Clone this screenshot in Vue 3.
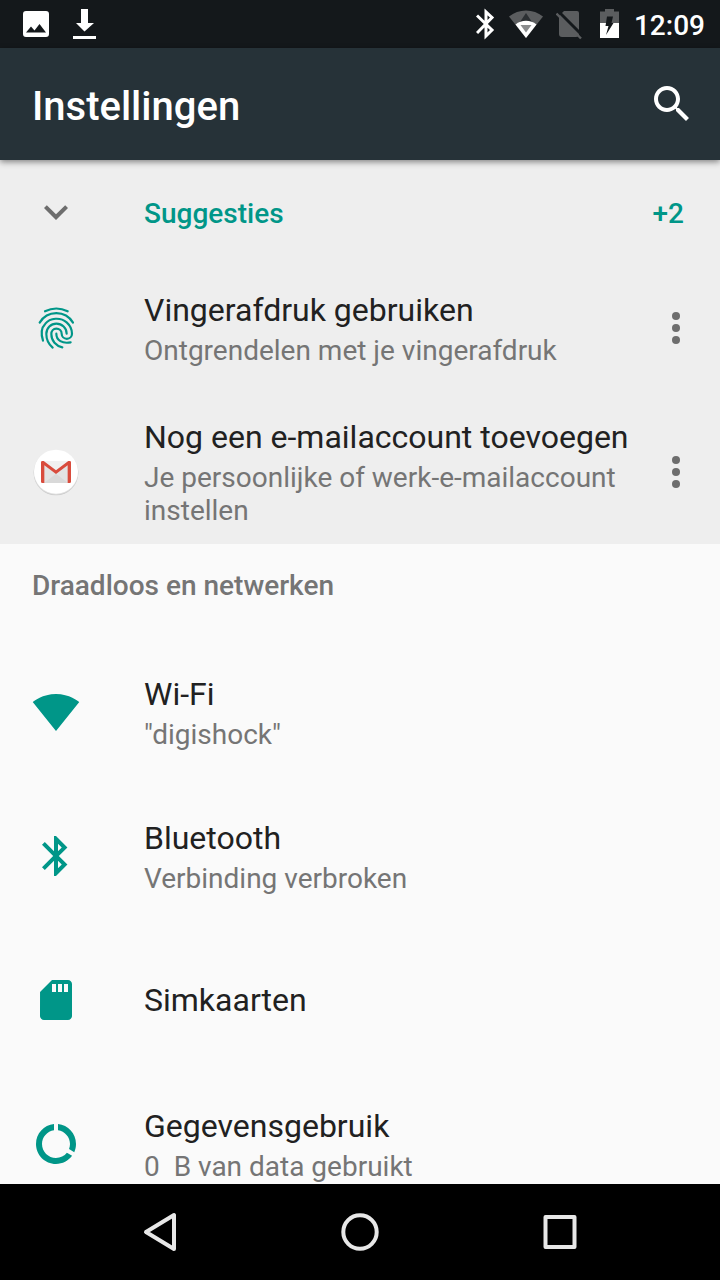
<script setup>
const suggestions = [
  { id: 'fingerprint', title: 'Vingerafdruk gebruiken', summary: 'Ontgrendelen met je vingerafdruk' },
  { id: 'mail', title: 'Nog een e-mailaccount toevoegen', summary: 'Je persoonlijke of werk-e-mailaccount instellen' }
]

const settings = [
  {
    id: 'wifi',
    title: 'Wi-Fi',
    summary: '"digishock"',
    icon: 'M12.01 21.49L23.64 7c-.45-.34-4.93-4-11.64-4C5.28 3 .81 6.66.36 7l11.63 14.49.01.01.01-.01z'
  },
  {
    id: 'bluetooth',
    title: 'Bluetooth',
    summary: 'Verbinding verbroken',
    icon: 'M17.71 7.71L12 2h-1v7.59L6.41 5 5 6.41 10.59 12 5 17.59 6.41 19 11 14.41V22h1l5.71-5.71-4.3-4.29 4.3-4.29zM13 5.83l1.88 1.88L13 9.59V5.83zm1.88 10.46L13 18.17v-3.76l1.88 1.88z'
  },
  {
    id: 'sim',
    title: 'Simkaarten',
    summary: '',
    icon: 'M18 2h-8L4.02 8 4 20c0 1.1.9 2 2 2h12c1.1 0 2-.9 2-2V4c0-1.1-.9-2-2-2zm-6 6h-2V4h2v4zm3 0h-2V4h2v4zm3 0h-2V4h2v4z'
  },
  {
    id: 'data',
    title: 'Gegevensgebruik',
    summary: '0\u00a0 B van data gebruikt',
    icon: 'M13 2.05v3.03c3.39.49 6 3.39 6 6.92 0 .9-.18 1.75-.48 2.54l2.6 1.53c.56-1.24.88-2.62.88-4.07 0-5.18-3.95-9.45-9-9.95zM12 19c-3.87 0-7-3.13-7-7 0-3.53 2.61-6.43 6-6.92V2.05c-5.06.5-9 4.76-9 9.95 0 5.52 4.47 10 9.99 10 3.31 0 6.24-1.61 8.06-4.09l-2.6-1.53C16.17 17.98 14.21 19 12 19z'
  }
]
</script>

<template>
  <div class="screen">
    <div class="status-bar">
      <div class="notifications">
        <svg width="28" height="48" viewBox="0 0 28 48" aria-hidden="true">
          <path fill="#fff" fill-rule="evenodd" d="M4 11h20a3 3 0 0 1 3 3v20a3 3 0 0 1-3 3H4a3 3 0 0 1-3-3V14a3 3 0 0 1 3-3zM4 32.500h20l-6.500-8.500-5 6.500-3.500-4z" />
        </svg>
        <svg width="24" height="48" viewBox="0 0 24 48" aria-hidden="true">
          <path fill="#fff" d="M9 9h7v14h6L12.500 31.500 4 23h5zM1 36h23v3H1z" />
        </svg>
      </div>
      <div class="system">
        <svg width="20" height="48" viewBox="476 0 20 48" aria-hidden="true">
          <path fill="none" stroke="#fff" stroke-width="3" d="M477 15.500l15 14.500-6 6V12l6 5.500L477 33" />
        </svg>
        <svg width="36" height="48" viewBox="508 0 36 48" aria-hidden="true">
          <path fill="#5b5d5f" d="M526 38L509 16.500a27 27 0 0 1 34 0z" />
          <path fill="#2c3033" d="M526 13l6 9h-12z" />
          <path fill="#fff" d="M526 38l-10.500-13.500a16.500 16.500 0 0 1 21 0z" />
          <path fill="#8a8c8d" d="M526 32.500l-5.500-7.500h11z" />
        </svg>
        <svg width="30" height="48" viewBox="556 0 30 48" aria-hidden="true">
          <path fill="#5b5d5f" d="M564 11h13q2 0 2 2v21q0 3-3 3h-14q-3 0-3-3V16z" />
          <path stroke="#14181b" stroke-width="3" d="M558 11l25 25" />
          <path stroke="#5b5d5f" stroke-width="2.400" d="M556.500 13.500l24.500 25" />
        </svg>
        <svg width="24" height="48" viewBox="598 0 24 48" aria-hidden="true">
          <path fill="#5b5d5f" d="M600 11.500h5V9h9v2.500h5V23h-19z" />
          <path fill="#fff" d="M600 23h19v15h-19z" />
          <path fill="#14181b" d="M607 16.500h6l-1.500 6.500h2l-7.500 12 2.500-9h-3z" />
        </svg>
        <span class="clock">12:09</span>
      </div>
    </div>

    <header class="app-bar">
      <h1>Instellingen</h1>
      <button type="button" class="icon-button" aria-label="Zoeken">
        <svg width="48" height="48" viewBox="0 0 24 24" fill="#fff">
          <path d="M15.500 14h-.79l-.28-.27C15.410 12.590 16 11.110 16 9.500 16 5.910 13.090 3 9.500 3S3 5.910 3 9.500 5.910 16 9.500 16c1.610 0 3.090-.59 4.230-1.570l.27.28v.79l5 4.990L20.490 19l-4.990-5zm-6 0C7.010 14 5 11.990 5 9.500S7.010 5 9.500 5 14 7.010 14 9.500 11.990 14 9.500 14z" />
        </svg>
      </button>
    </header>

    <main>
      <section class="suggestions">
        <button type="button" class="suggestions-head" aria-expanded="true">
          <svg width="48" height="48" viewBox="0 0 24 24" fill="#6d6d6d" aria-hidden="true">
            <path d="M16.590 8.590L12 13.170 7.410 8.590 6 10l6 6 6-6z" />
          </svg>
          <span class="head-label">Suggesties</span>
          <span class="head-count">+2</span>
        </button>

        <div v-for="item in suggestions" :key="item.id" class="suggestion">
          <a class="row" :href="'#' + item.id">
            <svg v-if="item.id === 'fingerprint'" class="row-icon" width="48" height="48" viewBox="18 27 144 144" aria-hidden="true">
              <g fill="none" stroke="#009688" stroke-width="6.500" stroke-linecap="round">
                <path d="M57 49Q91 32 125 49" />
                <path d="M41 83C64 45 118 45 141 83" />
                <path d="M51 137C44 115 46 98 58 86C72 68 104 66 122 82C133 92 138 104 138 116A15.500 15.500 0 0 1 107 116C107 107 100 101 91 101C82 101 76 108 76 117C76 138 90 153 109 157" />
                <path d="M80 158C66 146 61 132 61 117C61 99 75 86 91 86C108 86 122 99 122 116" />
                <path d="M91 116C91 136 109 147 134 142" />
              </g>
            </svg>
            <svg v-else class="row-icon" width="48" height="48" viewBox="18 24 144 144" aria-hidden="true">
              <circle cx="90" cy="99" r="67" fill="#c9c9c9" />
              <circle cx="90" cy="97" r="67" fill="#dedede" />
              <circle cx="90" cy="95" r="66" fill="#fff" />
              <path fill="#e3e3e3" d="M49 63h82v66H49z" />
              <path fill="#d9d9d9" d="M54 129l36-28 36 28z" />
              <path fill="#f1f1f1" d="M52 63h76L90 92z" />
              <path fill="#d94c3d" d="M45 67q0-4 4-4h4l37 28 37-28h4q4 0 4 4v58q0 4-4 4h-6V76L90 102 55 76v53h-6q-4 0-4-4z" />
            </svg>
            <span class="text">
              <span class="title">{{ item.title }}</span>
              <span class="summary">{{ item.summary }}</span>
            </span>
          </a>
          <button type="button" class="icon-button" :aria-label="'Meer opties: ' + item.title">
            <svg width="48" height="48" viewBox="0 0 48 48" fill="#6d6d6d">
              <circle cx="24" cy="12" r="4" />
              <circle cx="24" cy="24" r="4" />
              <circle cx="24" cy="36" r="4" />
            </svg>
          </button>
        </div>
      </section>

      <section>
        <h2>Draadloos en netwerken</h2>
        <a v-for="item in settings" :key="item.id" class="row" :href="'#' + item.id">
          <svg class="row-icon" width="48" height="48" viewBox="0 0 24 24" fill="#009688" aria-hidden="true">
            <path :d="item.icon" />
          </svg>
          <span class="text">
            <span class="title">{{ item.title }}</span>
            <span v-if="item.summary" class="summary">{{ item.summary }}</span>
          </span>
        </a>
      </section>
    </main>

    <nav aria-label="Systeemnavigatie">
      <button type="button" aria-label="Terug">
        <svg width="48" height="48" viewBox="0 0 48 48"><path d="M10 24l28-17v34z" /></svg>
      </button>
      <button type="button" aria-label="Startscherm">
        <svg width="48" height="48" viewBox="0 0 48 48"><circle cx="24" cy="24" r="16.700" /></svg>
      </button>
      <button type="button" aria-label="Overzicht">
        <svg width="48" height="48" viewBox="0 0 48 48"><rect x="9.500" y="9" width="29" height="30" /></svg>
      </button>
    </nav>
  </div>
</template>

<style>
body {
  margin: 0;
}
</style>

<style scoped>
.screen {
  height: 100vh;
  display: flex;
  flex-direction: column;
  overflow: hidden;
  background: #fafafa;
  color: #212121;
  font-family: Roboto, "Noto Sans", sans-serif;
}

button {
  margin: 0;
  padding: 0;
  border: 0;
  background: none;
  font-family: inherit;
  cursor: pointer;
}

svg {
  display: block;
  flex: none;
}

.status-bar {
  flex: none;
  display: flex;
  justify-content: space-between;
  height: 48px;
  padding: 0 15px 0 22px;
  background: #14181b;
}

.notifications,
.system {
  display: flex;
  align-items: center;
}

.notifications {
  gap: 22px;
}

.system {
  gap: 12px;
}

.clock {
  padding-top: 4px;
  color: #fff;
  font-size: 28px;
  font-weight: 500;
  line-height: 32px;
}

.app-bar {
  position: relative;
  flex: none;
  display: flex;
  align-items: center;
  justify-content: space-between;
  height: 112px;
  padding: 0 24px 0 32px;
  background: #263238;
  box-shadow: 0 2px 6px rgba(0, 0, 0, 0.45);
}

h1 {
  margin: 0;
  padding-top: 6px;
  color: #fff;
  font-size: 40px;
  font-weight: 500;
  line-height: 48px;
}

main {
  flex: 1;
  min-height: 0;
  overflow: hidden;
}

.suggestions {
  background: #eee;
}

.suggestions-head {
  display: flex;
  align-items: center;
  width: 100%;
  height: 96px;
  padding: 8px 36px 0 32px;
  color: #009688;
  font-size: 28px;
  font-weight: 500;
  line-height: 32px;
  text-align: left;
}

.head-label,
.head-count {
  padding-top: 4px;
}

.head-label {
  flex: 1;
  padding-left: 64px;
}

.suggestion {
  display: flex;
  align-items: center;
  padding-right: 20px;
}

.suggestion .row {
  flex: 1;
  min-width: 0;
}

.row {
  display: flex;
  align-items: center;
  gap: 64px;
  min-height: 144px;
  padding-left: 32px;
  color: inherit;
  text-decoration: none;
}

.text {
  display: flex;
  flex-direction: column;
  gap: 4px;
}

.title {
  font-size: 32px;
  line-height: 40px;
}

.summary {
  color: #757575;
  font-size: 28px;
  line-height: 33px;
}

h2 {
  height: 96px;
  margin: 0;
  padding: 0 32px;
  box-sizing: border-box;
  color: #757575;
  font-size: 28px;
  font-weight: 500;
  line-height: 84px;
}

nav {
  flex: none;
  display: flex;
  justify-content: center;
  height: 96px;
  background: #000;
}

nav button {
  flex: 0 1 200px;
  display: flex;
  align-items: center;
  justify-content: center;
}

nav svg {
  fill: none;
  stroke: #e8e8e8;
  stroke-width: 4;
  stroke-linejoin: round;
}
</style>
